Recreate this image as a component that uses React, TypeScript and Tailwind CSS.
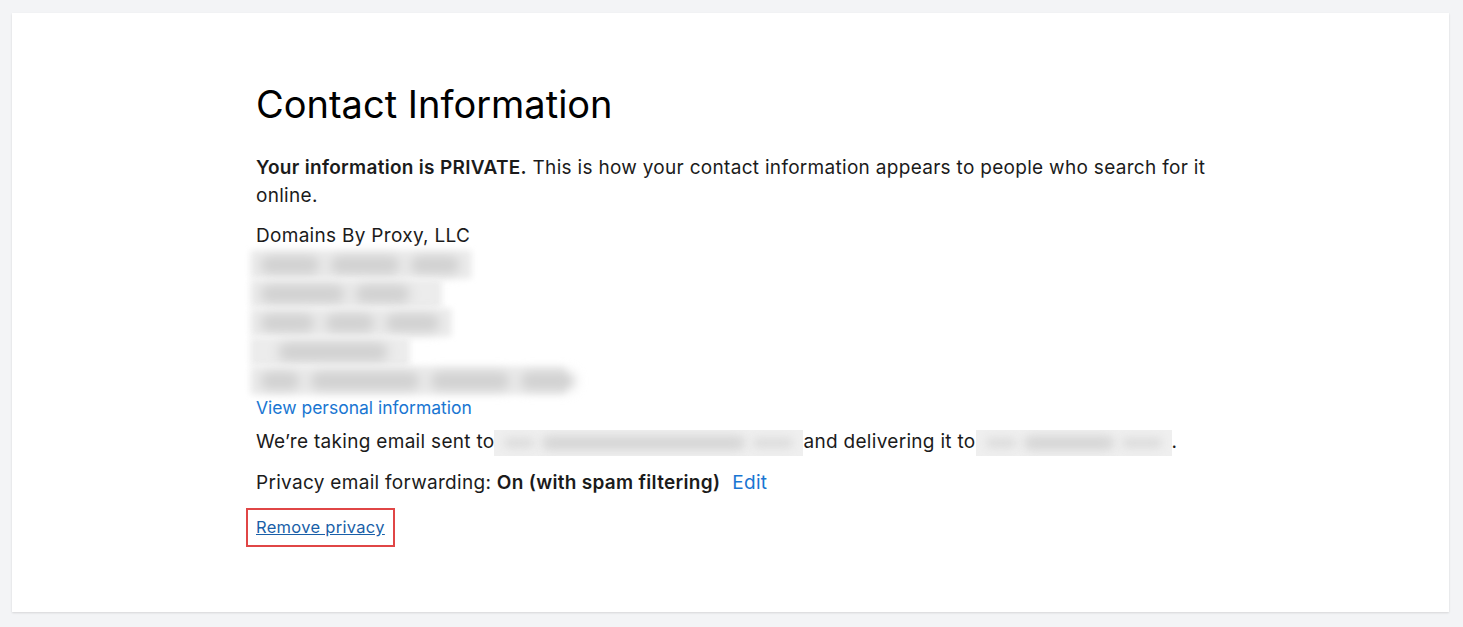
import React from 'react';

const Blob = ({ w }: { w: number }) => (
  <span className="inline-block h-[18px] shrink-0 rounded-full bg-[#d0d0d0] blur-[5px]" style={{ width: w }} />
);

// blurred-out address block: one soft grey band per line
const rows: { bg: number; indent: number; blobs: number[] }[] = [
  { bg: 222, indent: 10, blobs: [60, 70, 50] },
  { bg: 192, indent: 10, blobs: [85, 55] },
  { bg: 202, indent: 10, blobs: [55, 50, 55] },
  { bg: 160, indent: 28, blobs: [110] },
  { bg: 316, indent: 10, blobs: [40, 110, 80, 55] },
];

const BlurredAddress = () => (
  <div className="ml-[-6px] flex flex-col">
    {rows.map((row, i) => (
      <div
        key={i}
        className="flex h-[29px] items-center gap-[10px] rounded-[4px] bg-[#ececec] blur-[3px]"
        style={{ width: row.bg, paddingLeft: row.indent }}
      >
        {row.blobs.map((w, j) => (
          <Blob key={j} w={w} />
        ))}
      </div>
    ))}
  </div>
);

const BlurredEmail = ({ width }: { width: number }) => (
  <span
    className="relative inline-flex h-[26px] items-center gap-[8px] overflow-hidden bg-[#efefef] px-[10px] align-middle"
    style={{ width }}
  >
    <span className="h-[10px] w-[30px] rounded-full bg-[#dcdcdc] blur-[4px]" />
    <span className="h-[14px] flex-1 rounded-full bg-[#d6d6d6] blur-[5px]" />
    <span className="h-[10px] w-[40px] rounded-full bg-[#dcdcdc] blur-[4px]" />
  </span>
);

export default function App() {
  return (
    <div
      className="min-h-screen bg-[#f3f4f6] px-[12px] pt-[13px] text-[#1b1b1b] tracking-[0.3px]"
      style={{ fontFamily: 'Inter, "Noto Sans", sans-serif' }}
    >
      <div className="h-[599px] w-[1437px] bg-white shadow-[0_1px_2px_rgba(0,0,0,0.12)]">
        <div className="ml-[244px] w-[960px] pt-[67px]">
          <h1 className="text-[38px] leading-[48px] font-normal tracking-normal text-black">Contact Information</h1>

          <p className="mt-[26px] text-[19px] leading-[28px]">
            <span className="font-semibold">Your information is PRIVATE.</span> This is how your contact
            information appears to people who search for it online.
          </p>

          <p className="mt-[12px] text-[19px] leading-[28px]">Domains By Proxy, LLC</p>

          <BlurredAddress />

          <a href="#" className="block text-[17.5px] leading-[26px] tracking-normal text-[#1976d2]">
            View personal information
          </a>

          <p className="mt-[7px] text-[19px] leading-[28px]">
            We’re taking email sent to
            <BlurredEmail width={309} />
            and delivering it to
            <BlurredEmail width={196} />.
          </p>

          <p className="mt-[13px] text-[19px] leading-[28px]">
            Privacy email forwarding: <span className="font-semibold">On (with spam filtering)</span>
            <a href="#" className="ml-[12px] text-[#1976d2]">
              Edit
            </a>
          </p>

          <div className="mt-[11px] ml-[-10px] inline-block border-2 border-[#e04646] px-[8px] py-[5px]">
            <a href="#" className="text-[16.5px] leading-[25px] text-[#1a5fa8] underline">
              Remove privacy
            </a>
          </div>
        </div>
      </div>
    </div>
  );
}
